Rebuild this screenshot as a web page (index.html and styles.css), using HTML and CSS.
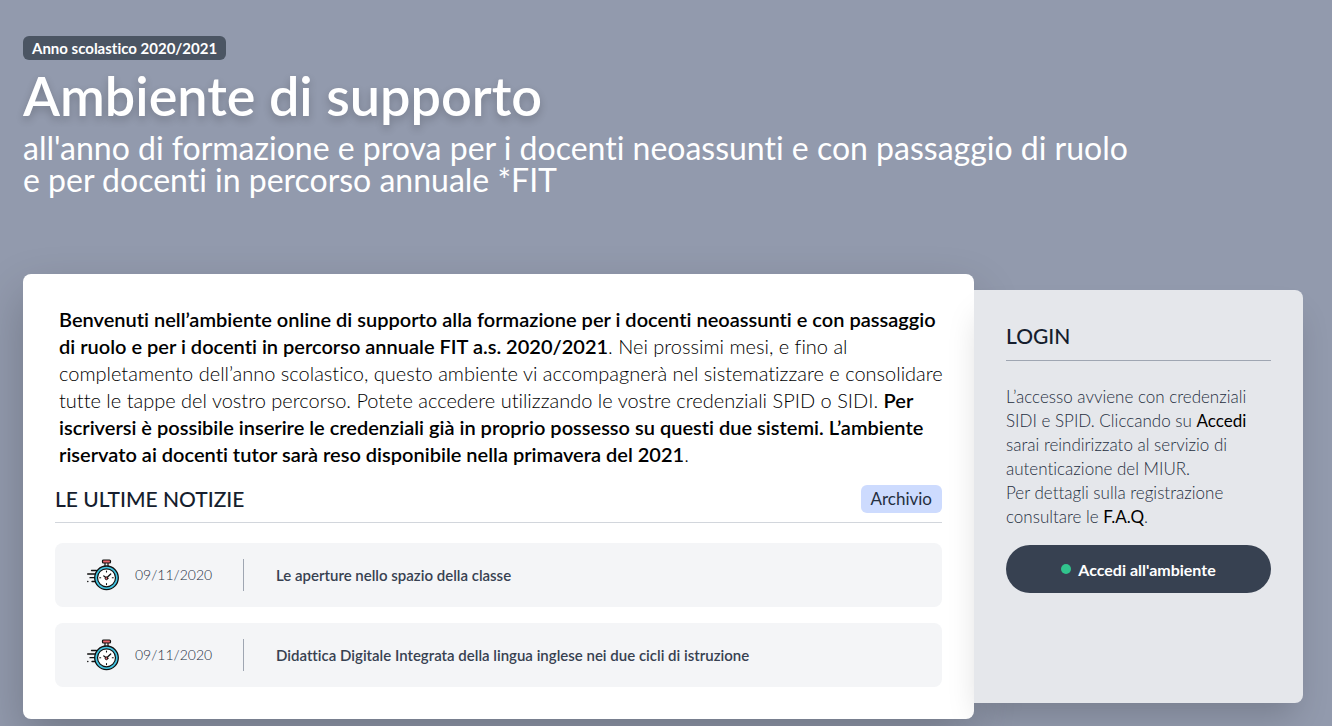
FILE: index.html
```html
<!DOCTYPE html>
<html lang="it">
<head>
    <meta charset="UTF-8">
    <meta name="viewport" content="width=device-width, initial-scale=1.0">
    <title>Ambiente di supporto - Neoassunti</title>
    <link rel="stylesheet" href="styles.css">
</head>
<body>
    <!-- Icona cronometro, riusata in ogni notizia -->
    <svg class="sprite" aria-hidden="true">
        <symbol id="stopwatch" viewBox="0 0 32 32">
            <g stroke="#111" stroke-linecap="round" stroke-linejoin="round">
                <path d="M18 4v4M21 4v4" stroke-width="1.2"/>
                <rect x="15.5" y="1" width="8" height="3" rx="1" fill="#e8636b" stroke-width="1.2"/>
                <circle cx="19.5" cy="18.8" r="11.8" fill="#43c6e4" stroke-width="1.3"/>
                <circle cx="19.5" cy="18.8" r="9" fill="#fff" stroke-width="1.2"/>
                <path d="M19.5 12v1M19.5 24.6v1M12.7 18.8h1M25.3 18.8h1" stroke-width="1.1"/>
                <path d="M16.8 17l2.7 2 4.2-4" fill="none" stroke-width="1.3"/>
                <circle cx="19.5" cy="19.3" r="1.4" fill="#e8636b" stroke-width="1"/>
                <path d="M4.5 11.5h5M.6 15h7M3 18.7h4.5M5 22.5h2.8M.7 22.5h.2" stroke-width="1.3"/>
            </g>
        </symbol>
    </svg>

    <div class="container">
        <!-- Intestazione -->
        <header class="header">
            <span class="badge">Anno scolastico 2020/2021</span>
            <h1 class="title">Ambiente di supporto</h1>
            <p class="subtitle">all'anno di formazione e prova per i docenti neoassunti e con passaggio di ruolo<br>e per docenti in percorso annuale *FIT</p>
        </header>

        <div class="panels">
            <!-- Presentazione e notizie -->
            <main class="main">
                <p class="intro">
                    <strong>Benvenuti nell’ambiente online di supporto alla formazione per i docenti neoassunti e con passaggio<br>
                    di ruolo e per i docenti in percorso annuale FIT a.s. 2020/2021</strong>. Nei prossimi mesi, e fino al<br>
                    completamento dell’anno scolastico, questo ambiente vi accompagnerà nel sistematizzare e consolidare<br>
                    tutte le tappe del vostro percorso. Potete accedere utilizzando le vostre credenziali SPID o SIDI. <strong>Per<br>
                    iscriversi è possibile inserire le credenziali già in proprio possesso su questi due sistemi. L’ambiente<br>
                    riservato ai docenti tutor sarà reso disponibile nella primavera del 2021</strong>.
                </p>

                <div class="news-header">
                    <h2 class="heading">LE ULTIME NOTIZIE</h2>
                    <a class="archive" href="#">Archivio</a>
                </div>

                <ul class="news">
                    <li class="news-item">
                        <svg class="news-icon" aria-hidden="true"><use href="#stopwatch"/></svg>
                        <time class="news-date" datetime="2020-11-09">09/11/2020</time>
                        <a class="news-title" href="#">Le aperture nello spazio della classe</a>
                    </li>
                    <li class="news-item">
                        <svg class="news-icon" aria-hidden="true"><use href="#stopwatch"/></svg>
                        <time class="news-date" datetime="2020-11-09">09/11/2020</time>
                        <a class="news-title" href="#">Didattica Digitale Integrata della lingua inglese nei due cicli di istruzione</a>
                    </li>
                </ul>
            </main>

            <!-- Login -->
            <aside class="login">
                <h2 class="heading login-heading">LOGIN</h2>
                <p class="login-text">
                    L’accesso avviene con credenziali<br>
                    SIDI e SPID. Cliccando su <b>Accedi</b><br>
                    sarai reindirizzato al servizio di<br>
                    autenticazione del MIUR.<br>
                    Per dettagli sulla registrazione<br>
                    consultare le <a class="faq" href="#">F.A.Q</a>.
                </p>
                <button class="login-button" type="button"><span class="dot"></span>Accedi all'ambiente</button>
            </aside>
        </div>
    </div>
</body>
</html>
```
FILE: styles.css
```css
* { margin: 0; padding: 0; box-sizing: border-box; }

body {
    background: #929aad;
    font-family: 'Lato', sans-serif;
    font-size: 16px;
    font-variant-ligatures: none;
    line-height: 24px;
    color: #000;
}

a {
    color: inherit;
    text-decoration: none;
}

.sprite {
    display: none;
}

.container {
    padding: 36px 29px 7px 23px;
}

/* Intestazione */
.header {
    color: #fff;
    margin-bottom: 78px;
}

.badge {
    display: block;
    width: fit-content;
    padding: 0 9px;
    border-radius: 6px;
    background: #4b5563;
    font-size: 15px;
    font-weight: 700;
}

.title {
    margin-top: 6px;
    font-size: 54px;
    font-weight: 600;
    line-height: 60px;
    text-shadow: 0 4px 8px rgba(0, 0, 0, 0.2);
}

.subtitle {
    margin-top: 6px;
    font-size: 32px;
    line-height: 32px;
}

/* Pannelli */
.panels {
    display: flex;
}

.main {
    flex: 1;
    min-width: 0;
    padding: 32px;
    border-radius: 8px;
    background: #fff;
    box-shadow: 0 20px 48px rgba(0, 0, 0, 0.22);
}

.intro {
    padding-left: 4px;
    font-size: 20px;
    font-weight: 300;
    line-height: 27px;
    white-space: nowrap;
}

.intro strong {
    font-weight: 600;
}

.heading {
    color: #161e2e;
    font-size: 21px;
    font-weight: 500;
    line-height: 28px;
}

.news-header {
    display: flex;
    justify-content: space-between;
    align-items: flex-start;
    margin-top: 17px;
    padding-bottom: 9px;
    border-bottom: 1px solid #d2d6dc;
}

.archive {
    padding: 0 10px;
    border-radius: 6px;
    background: #cddbfe;
    color: #252f3f;
    font-size: 17px;
    line-height: 28px;
}

.news {
    display: flex;
    flex-direction: column;
    gap: 16px;
    margin-top: 20px;
    list-style: none;
}

.news-item {
    display: flex;
    align-items: center;
    height: 64px;
    padding: 0 32px;
    border-radius: 8px;
    background: #f4f5f7;
}

.news-icon {
    width: 32px;
    height: 32px;
}

.news-date {
    width: 109px;
    margin: 0 32px 0 16px;
    border-right: 1px solid #9fa6b2;
    color: #252f3f;
    font-size: 14px;
    font-weight: 300;
    line-height: 32px;
}

.news-title {
    color: #374151;
    font-size: 15px;
    font-weight: 600;
}

/* Login */
.login {
    flex: 0 0 329px;
    margin: 16px 0;
    padding: 32px;
    border-radius: 0 8px 8px 0;
    background: #e5e7eb;
    box-shadow: 0 20px 32px -8px rgba(0, 0, 0, 0.18);
}

.login-heading {
    padding-bottom: 10px;
    border-bottom: 1px solid #9fa6b2;
}

.login-text {
    margin: 24px 0 16px;
    color: #252f3f;
    font-size: 17px;
    font-weight: 300;
}

.login-text b,
.faq {
    color: #000;
    font-weight: 400;
}

.login-button {
    display: flex;
    align-items: center;
    justify-content: center;
    gap: 7px;
    width: 100%;
    height: 48px;
    border: 0;
    border-radius: 24px;
    background: #374151;
    color: #fff;
    font-family: inherit;
    font-size: 16px;
    font-weight: 700;
    cursor: pointer;
}

.dot {
    width: 10px;
    height: 10px;
    border-radius: 50%;
    background: #31c48d;
}
```
